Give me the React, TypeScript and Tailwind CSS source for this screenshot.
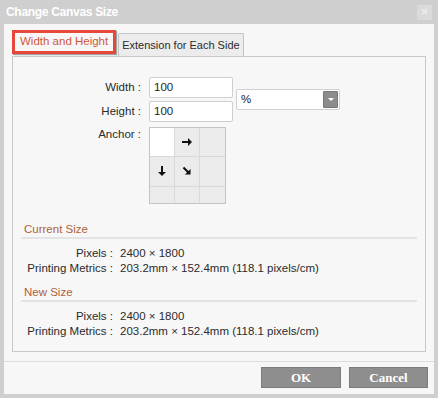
import React from 'react'

const font = { fontFamily: '"Liberation Sans", Arial, sans-serif' }
const serif = { fontFamily: '"Liberation Serif", serif' }

function Arrow({ dir }: { dir: 'right' | 'down' | 'diag' }) {
  const rot = dir === 'right' ? 0 : dir === 'down' ? 90 : 45
  return (
    <svg width="12" height="12" viewBox="0 0 12 12" style={{ transform: `rotate(${rot}deg)` }}>
      <path d="M1 5h6V2l4 4-4 4V7H1z" fill="#111" />
    </svg>
  )
}

function AnchorGrid() {
  const cells = [0, 1, 2, 3, 4, 5, 6, 7, 8]
  return (
    <div className="grid grid-cols-3 w-[77px] h-[77px] border border-[#c4c4c4] bg-[#ebebeb]">
      {cells.map(i => (
        <div
          key={i}
          className={`flex items-center justify-center border-[#d9d9d9] ${i % 3 !== 2 ? 'border-r' : ''} ${i < 6 ? 'border-b' : ''} ${i === 0 ? 'bg-white' : ''}`}
        >
          {i === 1 && <Arrow dir="right" />}
          {i === 3 && <Arrow dir="down" />}
          {i === 4 && <Arrow dir="diag" />}
        </div>
      ))}
    </div>
  )
}

function SizeSection({ title }: { title: string }) {
  return (
    <div className="mx-[8px]">
      <div className="pl-[3px] text-[11.5px] text-[#b0603a] leading-[14px] pb-[1px] border-b-2 border-[#e4e4e4]">{title}</div>
      <div className="mt-[7px] flex flex-col text-[11.5px] text-[#2b2b2b] leading-[15px]">
        <div className="flex">
          <span className="w-[92px] text-right">Pixels :</span>
          <span className="ml-[7px]">2400 × 1800</span>
        </div>
        <div className="flex">
          <span className="w-[92px] text-right">Printing Metrics :</span>
          <span className="ml-[7px]">203.2mm × 152.4mm (118.1 pixels/cm)</span>
        </div>
      </div>
    </div>
  )
}

export default function App() {
  return (
    <div className="w-[438px] h-[398px] bg-[#cfcfcf] flex flex-col" style={font}>
      {/* Title bar */}
      <div className="h-[24px] flex items-center justify-between pl-[6px] pr-[6px]">
        <span className="text-[12px] font-bold text-white tracking-[-0.3px]">Change Canvas Size</span>
        <div className="w-[15px] h-[15px] bg-[#dadada] flex items-center justify-center text-[12px] leading-none text-[#f4f4f4]">×</div>
      </div>

      <div className="flex-1 mx-[4px] mb-[4px] bg-[#f7f7f7] flex flex-col">
        {/* Tabs */}
        <div className="flex items-end pt-[6px] pl-[8px] h-[32px]">
          <div className="h-[24px] px-[5px] border-[3px] border-[#e8483b] bg-[#f7f7f7] flex items-center text-[11.5px] text-[#d0583a] shadow-[1px_1px_1px_rgba(0,0,0,0.35)] self-start">
            Width and Height
          </div>
          <div className="ml-[2px] h-[23px] px-[3px] border border-b-0 border-[#c4c4c4] rounded-t-[2px] bg-[#ececec] flex items-center text-[11px] text-[#2b2b2b]">
            Extension for Each Side
          </div>
        </div>

        {/* Panel */}
        <div className="mx-[8px] h-[296px] border border-[#c8c8c8] flex flex-col">
          <div className="flex mt-[20px]">
            <div className="flex flex-col gap-[3px]">
              {['Width', 'Height'].map(l => (
                <div key={l} className="flex items-center">
                  <span className="w-[128px] text-right text-[11.5px] text-[#2b2b2b]">{l} :</span>
                  <div className="ml-[8px] w-[84px] h-[21px] bg-white border border-[#cfcfcf] rounded-[2px] flex items-center px-[4px] text-[11.5px] text-[#222]">100</div>
                </div>
              ))}
            </div>
            <div className="ml-[3px] mt-[12px] w-[104px] h-[21px] bg-white border border-[#d0d0d0] rounded-[2px] flex items-center justify-between pl-[4px] pr-[1px]">
              <span className="text-[11.5px] text-[#222]">%</span>
              <div className="w-[15px] h-[17px] bg-[#8c8c8c] border border-[#777] rounded-[1px] flex items-center justify-center">
                <div className="w-0 h-0 border-l-[3px] border-r-[3px] border-t-[3px] border-l-transparent border-r-transparent border-t-white" />
              </div>
            </div>
          </div>

          <div className="flex mt-[5px]">
            <span className="w-[128px] text-right text-[11.5px] text-[#2b2b2b] leading-[14px]">Anchor :</span>
            <div className="ml-[8px]">
              <AnchorGrid />
            </div>
          </div>

          <div className="mt-[18px]">
            <SizeSection title="Current Size" />
          </div>
          <div className="mt-[9px]">
            <SizeSection title="New Size" />
          </div>
        </div>

        {/* Footer */}
        <div className="mt-[9px] border-t border-[#dedede] flex-1 flex items-start justify-end pr-[6px] pt-[5px] gap-[8px]">
          <button className="w-[80px] h-[21px] bg-[#8e8e8e] border border-[#7c7c7c] text-white text-[13px] font-bold" style={serif}>
            OK
          </button>
          <button className="w-[79px] h-[21px] bg-[#8e8e8e] border border-[#7c7c7c] text-white text-[13px] font-bold" style={serif}>
            Cancel
          </button>
        </div>
      </div>
    </div>
  )
}
